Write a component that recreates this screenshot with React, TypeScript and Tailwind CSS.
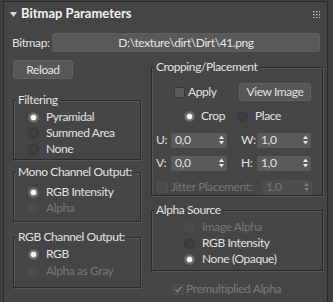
import React from 'react';

const Radio = ({ on = false, off = false }: { on?: boolean; off?: boolean }) => (
  <span
    className={`flex h-[11px] w-[11px] shrink-0 items-center justify-center rounded-full ${
      off
        ? 'bg-[#4a4a4a]'
        : on
          ? 'bg-[radial-gradient(circle,#8a8a8a_0%,#5a5a5a_70%)]'
          : 'bg-[radial-gradient(circle,#444_0%,#383838_80%)]'
    }`}
  >
    {on && <span className="h-[5px] w-[5px] rounded-full bg-white shadow-[0_0_2px_#fff]" />}
  </span>
);

const Check = ({ checked = false, off = false }: { checked?: boolean; off?: boolean }) => (
  <span
    className={`flex h-[11px] w-[11px] shrink-0 items-center justify-center border ${
      off ? 'border-[#505050] bg-[#4a4a4a]' : 'border-[#3a3a3a] bg-[#5a5a5a]'
    }`}
  >
    {checked && (
      <svg width="9" height="9" viewBox="0 0 9 9">
        <path d="M1.5 4.5 L3.5 6.8 L7.5 1.8" stroke="#7e7e7e" strokeWidth="1.6" fill="none" />
      </svg>
    )}
  </span>
);

const Arrows = ({ off = false }: { off?: boolean }) => (
  <svg width="5" height="10" viewBox="0 0 5 10" className="shrink-0">
    <path d="M0 4 L2.5 0.5 L5 4 Z M0 6 L2.5 9.5 L5 6 Z" fill={off ? '#7a7a7a' : '#e6e6e6'} />
  </svg>
);

const Spinner = ({ value, w, off = false }: { value: string; w: string; off?: boolean }) => (
  <div
    className={`flex h-[15px] items-center justify-between rounded-[2px] pl-[4px] pr-[3px] ${w} ${
      off ? 'bg-[#4c4c4c] text-[#767676]' : 'bg-[#5a5a5a] text-[#e4e4e4]'
    }`}
  >
    <span>{value}</span>
    <Arrows off={off} />
  </div>
);

const Group = ({
  title,
  h,
  children,
  className = '',
}: {
  title: string;
  h: string;
  children: React.ReactNode;
  className?: string;
}) => (
  <div
    className={`relative border border-[#2c2c2c] shadow-[1px_1px_0_#555,inset_1px_1px_0_#555] ${h} ${className}`}
  >
    <span className="absolute -top-[9px] left-[2px] whitespace-nowrap bg-[#454545] px-[2px] leading-[16px] text-[#e2e2e2]">
      {title}
    </span>
    {children}
  </div>
);

const Opt = ({ label, on, off }: { label: string; on?: boolean; off?: boolean }) => (
  <div className="flex h-[16px] items-center gap-[7px]">
    <Radio on={on} off={off} />
    <span className={`whitespace-nowrap ${off ? 'text-[#777]' : 'text-[#e2e2e2]'}`}>{label}</span>
  </div>
);

export default function App() {
  return (
    <div className="h-[302px] w-[333px] overflow-hidden bg-[#3e3e3e] pl-[3px] pt-[1px] font-['Lato',sans-serif] text-[12px] tracking-[-0.4px] text-[#e2e2e2]">
      <div className="h-[320px] w-[325px] border border-[#2b2b2b] bg-[#454545]">
        <div className="flex h-[24px] items-center pl-[6px] pr-[7px]">
          <svg width="7" height="5" viewBox="0 0 7 5">
            <path d="M0 0 L7 0 L3.5 5 Z" fill="#d8d8d8" />
          </svg>
          <span className="ml-[4px] text-[13px] font-bold tracking-normal text-[#f2f2f2]">Bitmap Parameters</span>
          <svg width="7" height="7" viewBox="0 0 7 7" className="ml-auto">
            {[0, 3, 6].map((y) =>
              [0, 3, 6].map((x) => <rect key={`${x}-${y}`} x={x} y={y} width="1.4" height="1.4" fill="#c8c8c8" />)
            )}
          </svg>
        </div>

        <div className="mt-[7px] flex h-[19px] items-center pl-[8px]">
          <span className="w-[40px]">Bitmap:</span>
          <div className="flex h-[19px] w-[268px] items-center justify-center rounded-[3px] border border-[#5f5f5f] bg-[#595959] text-[#e6e6e6]">
            D:\texture\dirt\Dirt\41.png
          </div>
        </div>

        <div className="mt-[8px] flex pl-[9px]">
          <div className="flex w-[128px] flex-col">
            <button className="flex h-[19px] w-[60px] items-center justify-center rounded-[3px] border border-[#616161] bg-[#575757] text-[#e6e6e6]">
              Reload
            </button>
            <Group title="Filtering" h="h-[60px]" className="mt-[21px] pl-[14px] pt-[8px]">
              <Opt label="Pyramidal" on />
              <Opt label="Summed Area" />
              <Opt label="None" />
            </Group>
            <Group title="Mono Channel Output:" h="h-[50px]" className="mt-[12px] pl-[14px] pt-[11px]">
              <Opt label="RGB Intensity" on />
              <Opt label="Alpha" off />
            </Group>
            <Group title="RGB Channel Output:" h="h-[51px]" className="mt-[15px] pl-[14px] pt-[8px]">
              <div className="flex flex-col gap-[1px]">
                <Opt label="RGB" on />
                <Opt label="Alpha as Gray" off />
              </div>
            </Group>
          </div>

          <div className="ml-[10px] flex w-[172px] flex-col">
            <Group title="Cropping/Placement" h="h-[129px]" className="mt-[7px] pt-[15px]">
              <div className="flex h-[18px] items-center pl-[22px] pr-[11px]">
                <Check />
                <span className="ml-[3px]">Apply</span>
                <button className="ml-auto flex h-[18px] w-[72px] items-center justify-center rounded-[3px] border border-[#616161] bg-[#575757]">
                  View Image
                </button>
              </div>
              <div className="mt-[7px] flex h-[16px] items-center pl-[32px]">
                <div className="flex w-[53px] items-center gap-[6px]">
                  <Radio on />
                  <span>Crop</span>
                </div>
                <div className="flex items-center gap-[7px]">
                  <Radio />
                  <span>Place</span>
                </div>
              </div>
              <div className="mt-[7px] flex items-center pl-[4px]">
                <span className="w-[15px]">U:</span>
                <Spinner value="0,0" w="w-[56px]" />
                <span className="ml-[14px] w-[16px]">W:</span>
                <Spinner value="1,0" w="w-[54px]" />
              </div>
              <div className="mt-[5px] flex items-center pl-[4px]">
                <span className="w-[15px]">V:</span>
                <Spinner value="0,0" w="w-[56px]" />
                <span className="ml-[14px] w-[16px]">H:</span>
                <Spinner value="1,0" w="w-[54px]" />
              </div>
              <div className="mt-[6px] flex items-center pl-[5px] pr-[10px]">
                <Check off />
                <span className="ml-[3px] whitespace-nowrap text-[#767676]">Jitter Placement:</span>
                <div className="ml-auto">
                  <Spinner value="1,0" w="w-[50px]" off />
                </div>
              </div>
            </Group>

            <Group title="Alpha Source" h="h-[61px]" className="mt-[14px] pl-[32px] pt-[8px]">
              <Opt label="Image Alpha" off />
              <Opt label="RGB Intensity" />
              <Opt label="None (Opaque)" on />
            </Group>

            <div className="mt-[11px] flex h-[14px] items-center pl-[22px]">
              <Check checked off />
              <span className="ml-[2px] text-[#7a7a7a]">Premultiplied Alpha</span>
            </div>
          </div>
        </div>
      </div>
    </div>
  );
}
